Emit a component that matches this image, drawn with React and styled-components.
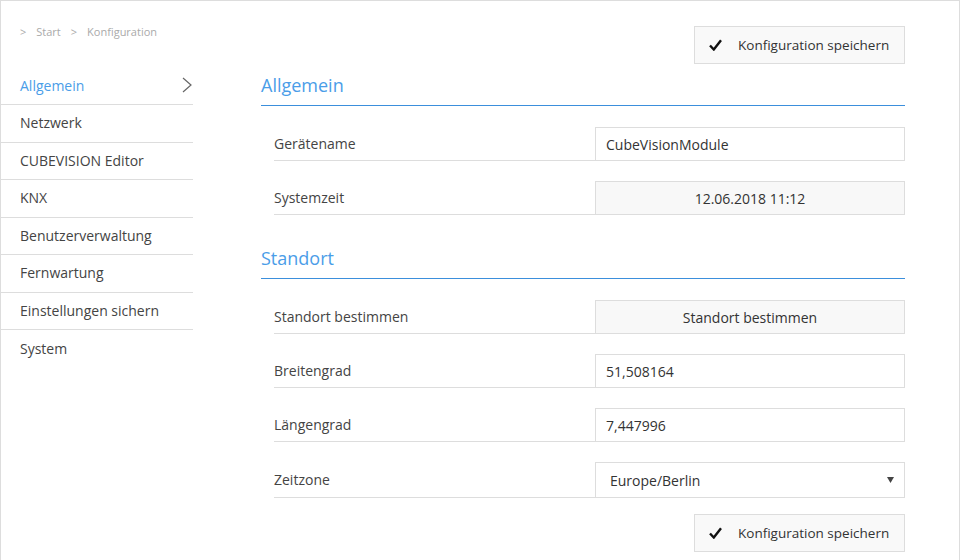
import React from 'react';
import styled, { createGlobalStyle } from 'styled-components';

const GlobalStyle = createGlobalStyle`
  html, body {
    margin: 0;
    padding: 0;
    background: #fff;
  }
  body {
    font-family: "Open Sans", "Noto Sans", sans-serif;
    color: #333;
  }
`;

const Frame = styled.div`
  box-sizing: border-box;
  width: 960px;
  height: 560px;
  border: 1px solid #ddd;
  border-bottom: none;
  display: flex;
  overflow: hidden;
`;

const Sidebar = styled.aside`
  width: 192px;
  flex-shrink: 0;
`;

const Breadcrumb = styled.div`
  padding: 24px 0 0 19px;
  height: 42.5px;
  font-size: 11px;
  line-height: 14px;
  color: #aaa;
  display: flex;
  gap: 10px;
`;

const Nav = styled.nav`
  display: flex;
  flex-direction: column;
`;

const NavItem = styled.div`
  box-sizing: border-box;
  height: 37.5px;
  padding-left: 19px;
  padding-bottom: 1px;
  display: flex;
  align-items: center;
  justify-content: space-between;
  font-size: 14px;
  color: ${(p) => (p.$active ? '#4a9de8' : '#444')};
  border-bottom: ${(p) => (p.$last ? 'none' : '1px solid #ddd')};
`;

const Main = styled.main`
  width: 644px;
  margin-left: 68px;
  padding-top: 25px;
`;

const ButtonRow = styled.div`
  display: flex;
  justify-content: flex-end;
  margin-top: ${(p) => p.$mt || 0}px;
`;

const SaveButton = styled.button`
  box-sizing: border-box;
  width: 211px;
  height: 38px;
  border: 1px solid #ddd;
  background: #f9f9f9;
  font-family: inherit;
  font-size: 13.5px;
  color: #333;
  display: flex;
  align-items: center;
  gap: 16px;
  padding: 0 0 0 14px;
`;

const SectionTitle = styled.h2`
  margin: ${(p) => p.$mt}px 0 0;
  padding: 0 0 8px 0;
  font-weight: 400;
  font-size: 18px;
  line-height: 24px;
  color: #4a9de8;
  border-bottom: 1px solid #3b8fdc;
`;

const Rows = styled.div`
  margin-left: 13px;
  padding-top: 21px;
  display: flex;
  flex-direction: column;
  gap: 20px;
`;

const Row = styled.div`
  display: grid;
  grid-template-columns: 1fr 310px;
  height: ${(p) => p.$h || 34}px;
`;

const Label = styled.div`
  box-sizing: border-box;
  border-bottom: 1px solid #ddd;
  display: flex;
  align-items: center;
  font-size: 14px;
  color: #444;
`;

const Field = styled.div`
  box-sizing: border-box;
  border: 1px solid #ddd;
  background: ${(p) => (p.$muted ? '#f8f8f8' : '#fff')};
  display: flex;
  align-items: center;
  justify-content: ${(p) => (p.$center ? 'center' : 'space-between')};
  padding: 0 ${(p) => (p.$center ? 0 : 10)}px 0 ${(p) => (p.$center ? 0 : p.$pl || 10)}px;
  font-size: 14px;
  color: #333;
`;

const Check = () => (
  <svg width="13" height="12" viewBox="0 0 13 12">
    <path d="M1 6.5 L4.8 10.5 L12 1.2" fill="none" stroke="#111" strokeWidth="2.4" strokeLinejoin="miter" />
  </svg>
);

const Chevron = () => (
  <svg width="10" height="16" viewBox="0 0 10 16" style={{ marginRight: 1 }}>
    <polyline points="1,1 9,8 1,15" fill="none" stroke="#666" strokeWidth="1.2" />
  </svg>
);

const Caret = () => (
  <svg width="7" height="6" viewBox="0 0 7 6">
    <polygon points="0,0 7,0 3.5,6" fill="#444" />
  </svg>
);

const navItems = [
  'Allgemein',
  'Netzwerk',
  'CUBEVISION Editor',
  'KNX',
  'Benutzerverwaltung',
  'Fernwartung',
  'Einstellungen sichern',
  'System',
];

const Save = () => (
  <SaveButton>
    <Check />
    Konfiguration speichern
  </SaveButton>
);

export default function App() {
  return (
    <>
      <GlobalStyle />
      <Frame>
        <Sidebar>
          <Breadcrumb>
            <span>&gt;</span>
            <span>Start</span>
            <span>&gt;</span>
            <span>Konfiguration</span>
          </Breadcrumb>
          <Nav>
            {navItems.map((item, i) => (
              <NavItem key={item} $active={i === 0} $last={i === navItems.length - 1}>
                {item}
                {i === 0 && <Chevron />}
              </NavItem>
            ))}
          </Nav>
        </Sidebar>
        <Main>
          <ButtonRow>
            <Save />
          </ButtonRow>
          <SectionTitle $mt={9}>Allgemein</SectionTitle>
          <Rows>
            <Row>
              <Label>Gerätename</Label>
              <Field>CubeVisionModule</Field>
            </Row>
            <Row>
              <Label>Systemzeit</Label>
              <Field $muted $center>12.06.2018 11:12</Field>
            </Row>
          </Rows>
          <SectionTitle $mt={31}>Standort</SectionTitle>
          <Rows>
            <Row>
              <Label>Standort bestimmen</Label>
              <Field $muted $center>Standort bestimmen</Field>
            </Row>
            <Row>
              <Label>Breitengrad</Label>
              <Field>51,508164</Field>
            </Row>
            <Row>
              <Label>Längengrad</Label>
              <Field>7,447996</Field>
            </Row>
            <Row $h={36}>
              <Label>Zeitzone</Label>
              <Field $pl={14}>
                Europe/Berlin
                <Caret />
              </Field>
            </Row>
          </Rows>
          <ButtonRow $mt={16}>
            <Save />
          </ButtonRow>
        </Main>
      </Frame>
    </>
  );
}
